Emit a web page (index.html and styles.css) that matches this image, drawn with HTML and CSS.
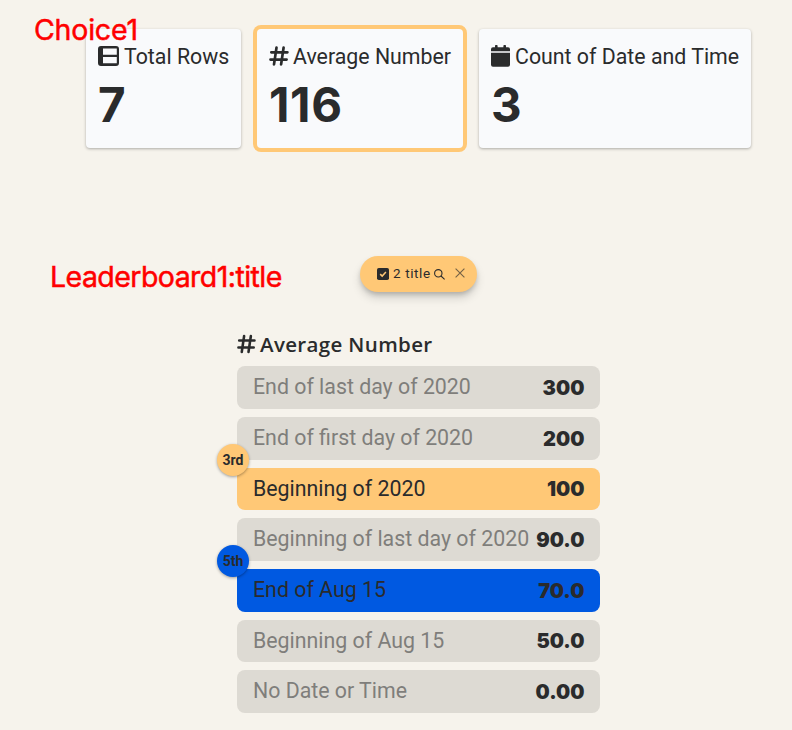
FILE: index.html
```
<!DOCTYPE html>
<html lang="en">
<head>
<meta charset="utf-8">
<title>Leaderboard</title>
<link rel="stylesheet" href="styles.css">
</head>
<body>
<svg class="defs" width="0" height="0">
  <symbol id="hash" viewBox="0 0 20 20"><path d="M7.5 1.6 5 18.4M14.6 1.6 12.1 18.4M2.3 6.3H18.4M1.5 13.6H17.6" fill="none" stroke="currentColor" stroke-width="2.7" stroke-linecap="round"/></symbol>
</svg>
<main class="page">
  <section class="choices">
    <div class="note note-choice">Choice1</div>
    <article class="card card-rows">
      <h2 class="label"><svg class="icon-rows" viewBox="0 0 22 20"><path fill="currentColor" fill-rule="evenodd" d="M3 0H18Q21 0 21 3V17Q21 20 18 20H3Q0 20 0 17V3Q0 0 3 0ZM5 2.5V8.8H18.8V2.5ZM5 11V17.3H18.8V11Z"/></svg><span>Total Rows</span></h2>
      <p class="metric">7</p>
    </article>
    <article class="card card-average selected">
      <h2 class="label"><svg class="icon-hash"><use href="#hash"/></svg><span>Average Number</span></h2>
      <p class="metric">116</p>
    </article>
    <article class="card card-count">
      <h2 class="label"><svg class="icon-calendar" viewBox="0 0 19 22"><path fill="currentColor" d="M2 2.3H4V.8Q4 0 4.8 0H5.8Q6.6 0 6.6 .8V2.3H12.4V.8Q12.4 0 13.2 0H14.2Q15 0 15 .8V2.3H17Q19 2.3 19 4.3V6.3H0V4.3Q0 2.3 2 2.3ZM0 7.7H19V19.8Q19 21.8 17 21.8H2Q0 21.8 0 19.8Z"/></svg><span>Count of Date and Time</span></h2>
      <p class="metric">3</p>
    </article>
  </section>
  <section class="filterbar">
    <div class="note note-title">Leaderboard1:title</div>
    <div class="pill">
      <svg class="icon-check" viewBox="0 0 12 12"><rect width="12" height="12" rx="1.8" fill="#2a2b2c"/><path d="m3.2 6.1 2 2 3.7-4" fill="none" stroke="#ffc876" stroke-width="1.5"/></svg>
      <span class="pill-text">2 title</span>
      <svg class="icon-search" viewBox="0 0 11 11"><circle cx="4.3" cy="4.3" r="3.7"/><path d="m7 7 3.6 3.3"/></svg>
      <svg class="icon-close" viewBox="0 0 10 10"><path d="m.6.6 8.8 8.8M9.4.6.6 9.4"/></svg>
    </div>
  </section>
  <section class="board">
    <h2 class="board-title"><svg class="icon-hash"><use href="#hash"/></svg><span>Average Number</span></h2>
    <ol class="rows">
      <li class="row"><span class="name">End of last day of 2020</span><span class="value">300</span></li>
      <li class="row"><span class="name">End of first day of 2020</span><span class="value">200</span></li>
      <li class="row amber"><span class="badge">3rd</span><span class="name">Beginning of 2020</span><span class="value">100</span></li>
      <li class="row"><span class="name">Beginning of last day of 2020</span><span class="value">90.0</span></li>
      <li class="row blue"><span class="badge">5th</span><span class="name">End of Aug 15</span><span class="value">70.0</span></li>
      <li class="row"><span class="name">Beginning of Aug 15</span><span class="value">50.0</span></li>
      <li class="row"><span class="name">No Date or Time</span><span class="value">0.00</span></li>
    </ol>
  </section>
</main>
</body>
</html>
```
FILE: styles.css
```
* { box-sizing: border-box; margin: 0; padding: 0; }
body { background: #f6f3ec; color: #2a2b2c; font-family: Roboto, sans-serif; overflow: hidden; }
.defs { position: absolute; }
.page { height: 730px; padding-top: 29px; }

.choices { position: relative; display: flex; gap: 16px; padding-left: 86px; height: 227px; align-items: flex-start; }
.card { height: 119px; padding: 11px 12px 12px; border-radius: 4px; background: #f9fafc; box-shadow: 0 1px 3px rgba(0,0,0,.3); white-space: nowrap; }
.card-rows { width: 155px; }
.card-average { width: 206px; }
.card-count { width: 272px; }
.selected { box-shadow: 0 0 0 4px #ffc876; }
.label { display: flex; align-items: center; height: 32px; gap: 4px; font-size: 21.33px; font-weight: 400; }
.card-count .label { gap: 5px; }
.metric { height: 60px; margin-top: 3px; font: 700 47.5px/60px Inter, sans-serif; letter-spacing: .6px; }
.icon-rows { width: 22px; height: 20px; flex: none; }
.icon-hash { width: 20px; height: 20px; flex: none; }
.icon-calendar { width: 19px; height: 22px; flex: none; }

.note { color: #f00; font: 400 28.5px/34px Inter, sans-serif; letter-spacing: -.55px; -webkit-text-stroke: .5px #f00; white-space: nowrap; }
.note-choice { position: absolute; left: 34px; top: -16px; z-index: 1; letter-spacing: -.2px; }

.filterbar { display: flex; align-items: flex-start; height: 74px; padding-left: 50px; }
.note-title { width: 310px; padding-top: 4px; }
.pill { display: flex; align-items: center; width: 117px; height: 36px; padding: 0 11px 1px 17px; border-radius: 18px; background: #ffc876; box-shadow: 0 3px 5px -1px rgba(0,0,0,.2), 0 6px 10px rgba(0,0,0,.14); }
.icon-check { width: 12px; height: 12px; }
.pill-text { margin: -1px 3px 0 4px; font-size: 13.5px; letter-spacing: .6px; white-space: nowrap; }
.icon-search, .icon-close { fill: none; stroke: #2a2b2c; stroke-width: 1.1; }
.icon-search { width: 11px; height: 11px; margin-top: 1px; }
.icon-close { width: 10px; height: 10px; margin: -1px 1px 0 auto; opacity: .65; }

.board { width: 363.4px; margin-left: 237px; }
.board-title { display: flex; align-items: center; gap: 4px; height: 28px; margin-bottom: 8.3px; font: 600 20.5px/28px "Open Sans", sans-serif; letter-spacing: .35px; white-space: nowrap; }
.board-title .icon-hash { width: 19px; }
.rows { display: grid; gap: 8px; list-style: none; }
.row { position: relative; display: flex; align-items: center; justify-content: space-between; height: 42.67px; padding: 0 16px; border-radius: 8px; background: #dddad3; }
.name { margin-top: -1.7px; color: #7f7e7b; font-size: 21.33px; white-space: nowrap; }
.value { padding-top: 1px; font: 900 20px/24px Inter, sans-serif; }
.amber { background: #ffc876; }
.blue { background: #0059e1; }
.amber .name, .blue .name { color: #2a2b2c; }
.badge { position: absolute; left: -20px; top: -24px; display: flex; align-items: center; justify-content: center; width: 32px; height: 32px; border-radius: 50%; font-size: 14px; font-weight: 700; background: inherit; box-shadow: 0 1px 3px rgba(0,0,0,.35); z-index: 1; }
```
